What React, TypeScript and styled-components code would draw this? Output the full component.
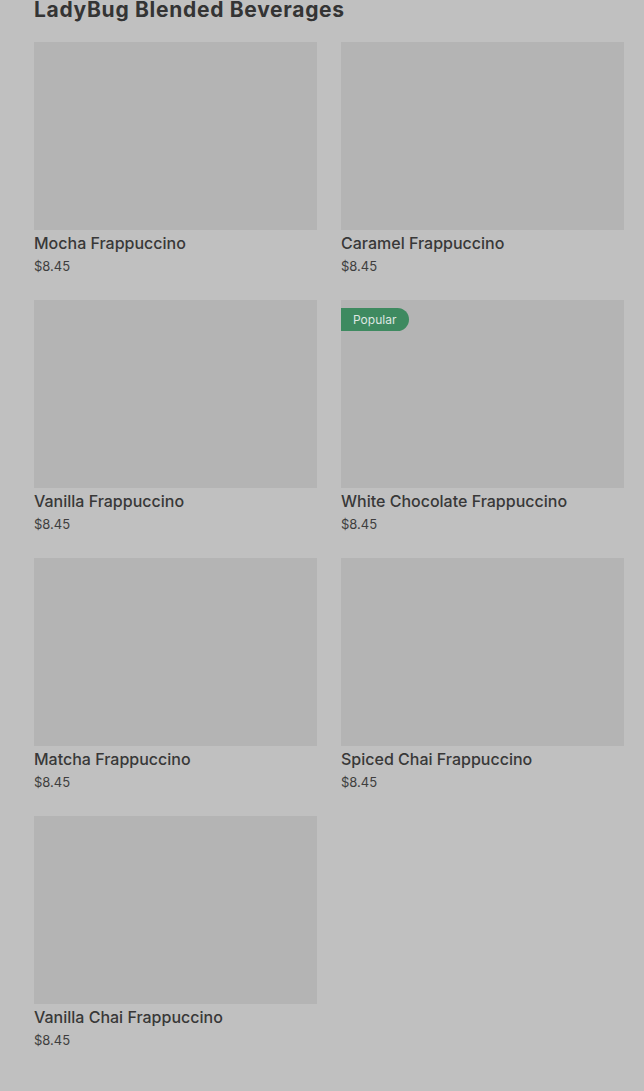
import React from "react";
import styled, { createGlobalStyle } from "styled-components";

const Global = createGlobalStyle`
  html, body { margin: 0; padding: 0; background: #c0c0c0; }
  body { font-family: Inter, "Noto Sans", sans-serif; -webkit-font-smoothing: antialiased; }
`;

const Page = styled.div`
  padding: 0 20px 40px 34px;
  overflow: hidden;
`;

const Title = styled.h1`
  margin: 0 0 22px;
  font-size: 21px;
  line-height: 20px;
  font-weight: 700;
  letter-spacing: 0.7px;
  color: #343434;
`;

const Grid = styled.div`
  display: grid;
  grid-template-columns: 1fr 1fr;
  column-gap: 24px;
  row-gap: 25px;
`;

const Card = styled.div`
  display: flex;
  flex-direction: column;
`;

const Thumb = styled.div`
  position: relative;
  height: 188px;
  background: #b4b4b4;
`;

const Badge = styled.span`
  position: absolute;
  top: 8px;
  left: 0;
  height: 23px;
  display: flex;
  align-items: center;
  padding: 0 13px 0 12px;
  background: #3e8a60;
  color: #dfe7e2;
  font-size: 12px;
  border-radius: 0 12px 12px 0;
`;

const Name = styled.div`
  margin-top: 3px;
  font-size: 16px;
  line-height: 20px;
  font-weight: 500;
  color: #383838;
`;

const Price = styled.div`
  margin-top: 4px;
  font-size: 13px;
  line-height: 18px;
  color: #3e3e3e;
`;

const items: { name: string; popular?: boolean }[] = [
  { name: "Mocha Frappuccino" },
  { name: "Caramel Frappuccino" },
  { name: "Vanilla Frappuccino" },
  { name: "White Chocolate Frappuccino", popular: true },
  { name: "Matcha Frappuccino" },
  { name: "Spiced Chai Frappuccino" },
  { name: "Vanilla Chai Frappuccino" },
];

export default function App() {
  return (
    <>
      <Global />
      <Page>
        <Title>LadyBug Blended Beverages</Title>
        <Grid>
          {items.map((it) => (
            <Card key={it.name}>
              <Thumb>{it.popular && <Badge>Popular</Badge>}</Thumb>
              <Name>{it.name}</Name>
              <Price>$8.45</Price>
            </Card>
          ))}
        </Grid>
      </Page>
    </>
  );
}
